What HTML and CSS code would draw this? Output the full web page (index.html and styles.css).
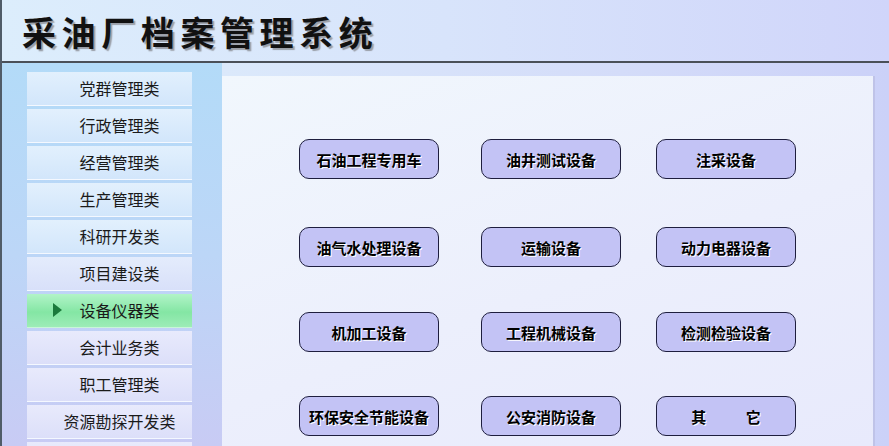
FILE: index.html
```html
<!DOCTYPE html>
<html lang="zh-CN">
<head>
<meta charset="UTF-8" />
<meta name="viewport" content="width=device-width, initial-scale=1" />
<title>采油厂档案管理系统</title>
<link rel="stylesheet" href="styles.css">
</head>
<body>

<div class="app">
  <header class="top">
    <h1>采油厂档案管理系统</h1>
  </header>

  <div class="main">
    <nav class="side">
      <div class="cat">党群管理类</div>
      <div class="cat">行政管理类</div>
      <div class="cat">经营管理类</div>
      <div class="cat">生产管理类</div>
      <div class="cat">科研开发类</div>
      <div class="cat">项目建设类</div>
      <div class="cat active">设备仪器类</div>
      <div class="cat">会计业务类</div>
      <div class="cat">职工管理类</div>
      <div class="cat">资源勘探开发类</div>
      <div class="cat"></div>
    </nav>

    <section class="board">
      <div class="panel">
        <div class="grid">
          <button class="kind">石油工程专用车</button>
          <button class="kind">油井测试设备</button>
          <button class="kind">注采设备</button>
          <button class="kind">油气水处理设备</button>
          <button class="kind">运输设备</button>
          <button class="kind">动力电器设备</button>
          <button class="kind">机加工设备</button>
          <button class="kind">工程机械设备</button>
          <button class="kind">检测检验设备</button>
          <button class="kind">环保安全节能设备</button>
          <button class="kind">公安消防设备</button>
          <button class="kind spread">其 它</button>
        </div>
      </div>
    </section>
  </div>
</div>

</body>
</html>
```

FILE: styles.css
```css
body {
  margin: 0;
  overflow: hidden;
  font-family: "Noto Sans CJK SC", "Noto Sans", sans-serif;
  color: #1a1a1a;
}
.app {
  height: 446px;
  border-left: 2px solid #505c68;
  display: flex;
  flex-direction: column;
}
.top {
  height: 61px;
  flex: none;
  border-bottom: 2px solid #4a5058;
  background: linear-gradient(to right, #dcedfc, #d8e4fb 50%, #d0d5fa);
}
.top h1 {
  margin: 0;
  padding-left: 20px;
  line-height: 63px;
  font-size: 34px;
  font-weight: bold;
  letter-spacing: 5.6px;
  color: #111;
  text-shadow: 2px 2px 1px #9a9fa8;
}
.main {
  flex: 1;
  display: flex;
  min-height: 0;
}

/* left menu */
.side {
  width: 220px;
  flex: none;
  overflow: hidden;
  padding-top: 9px;
  background: linear-gradient(to bottom, #b3dbf8, #bcd6f7 50%, #c8cbf4);
}
.cat {
  position: relative;
  width: 145px;
  height: 33px;
  margin: 0 0 3px 25px;
  padding-left: 20px;
  border-bottom: 1px solid #f4f8ff;
  background: linear-gradient(to bottom, #e2f0fd, #d2e6fb);
  font-size: 16px;
  line-height: 33px;
  text-align: center;
}
.cat:nth-child(n+6) {
  background: linear-gradient(to bottom, #e4ecfc, #d8e0f9);
}
.cat:nth-child(n+8) {
  background: linear-gradient(to bottom, #e8eafc, #dcdff9);
}
.cat.active {
  background: linear-gradient(to bottom, #b2f4c8, #84e6a4 55%, #9decb7);
  border-bottom-color: #c8f6d8;
}
.cat.active::before {
  content: "";
  position: absolute;
  left: 26px;
  top: 9px;
  border-left: 9px solid #1b7a3c;
  border-top: 7.5px solid transparent;
  border-bottom: 7.5px solid transparent;
}

/* right board */
.board {
  flex: 1;
  display: flex;
  flex-direction: column;
  background: linear-gradient(to right, #dbe9fb, #d4dcf9 60%, #cbd1f8);
}
.panel {
  flex: 1;
  margin: 13px 14px 0 0;
  border-right: 2px solid #bfc3e8;
  background: linear-gradient(160deg, #f1f7fd, #eceffc 55%, #e8eafc);
}
.grid {
  display: grid;
  grid-template-columns: 182px 175px 140px;
  grid-template-rows: 88px 85px 84px 40px;
  padding: 63px 0 0 77px;
}
.kind {
  width: 140px;
  height: 40px;
  padding: 0;
  border: 1px solid #1e1e3e;
  border-radius: 10px;
  background: #c3c3f5;
  font-family: inherit;
  font-size: 15px;
  font-weight: bold;
  color: #000;
  text-shadow: 1px 1px 0 #fff;
  cursor: pointer;
}
.kind:hover {
  background: #b4b4f0;
}
.spread {
  word-spacing: 36px;
}
```
